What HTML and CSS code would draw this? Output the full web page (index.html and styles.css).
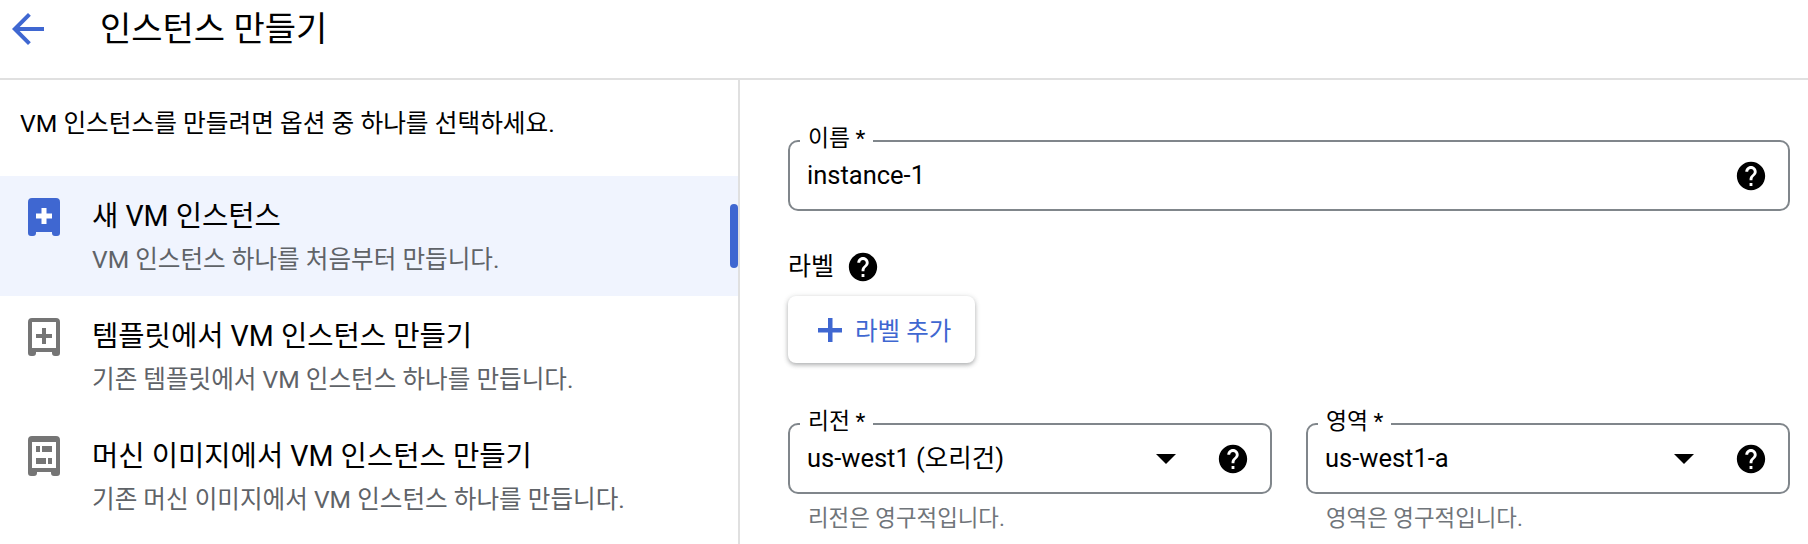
FILE: index.html
```html
<!DOCTYPE html>
<html lang="ko">
<head>
    <meta charset="UTF-8">
    <title>인스턴스 만들기</title>
    <link rel="stylesheet" href="styles.css">
</head>
<body>
    <svg class="defs" width="0" height="0">
        <symbol id="help" viewBox="0 0 24 24">
            <path d="M12 2C6.48 2 2 6.48 2 12s4.48 10 10 10 10-4.48 10-10S17.52 2 12 2zm1 17h-2v-2h2v2zm2.07-7.75l-.9.92C13.45 12.9 13 13.5 13 15h-2v-.5c0-1.1.45-2.1 1.17-2.83l1.24-1.26c.37-.36.59-.86.59-1.41 0-1.1-.9-2-2-2s-2 .9-2 2H8c0-2.21 1.79-4 4-4s4 1.79 4 4c0 .88-.36 1.68-.93 2.25z"/>
        </symbol>
    </svg>

    <header class="header">
        <svg class="back" viewBox="0 0 24 24"><path d="M20 11H7.83l5.59-5.59L12 4l-8 8 8 8 1.41-1.41L7.83 13H20v-2z"/></svg>
        <h1>인스턴스 만들기</h1>
    </header>

    <div class="main">
        <div class="sidebar">
            <p class="intro">VM 인스턴스를 만들려면 옵션 중 하나를 선택하세요.</p>

            <div class="item selected">
                <svg class="item-icon" viewBox="0 0 32 40">
                    <path d="M4 2h24a4 4 0 0 1 4 4v31a3 3 0 0 1-3 3h-2a3 3 0 0 1-3-3v-1H8v1a3 3 0 0 1-3 3H3a3 3 0 0 1-3-3V6a4 4 0 0 1 4-4z"/>
                    <path class="cut" d="M13.500 12h5v5.500H24v5h-5.500V28h-5v-5.500H8v-5h5.500z"/>
                </svg>
                <div>
                    <div class="item-title">새 VM 인스턴스</div>
                    <div class="item-sub">VM 인스턴스 하나를 처음부터 만듭니다.</div>
                </div>
                <span class="indicator"></span>
            </div>

            <div class="item">
                <svg class="item-icon" viewBox="0 0 32 40">
                    <path fill-rule="evenodd" d="M4 2h24a4 4 0 0 1 4 4v31a3 3 0 0 1-3 3h-2a3 3 0 0 1-3-3v-1H8v1a3 3 0 0 1-3 3H3a3 3 0 0 1-3-3V6a4 4 0 0 1 4-4zM4 6v26h24V6z"/>
                    <path d="M14 12h4v6h6v4h-6v6h-4v-6H8v-4h6z"/>
                </svg>
                <div>
                    <div class="item-title">템플릿에서 VM 인스턴스 만들기</div>
                    <div class="item-sub">기존 템플릿에서 VM 인스턴스 하나를 만듭니다.</div>
                </div>
            </div>

            <div class="item">
                <svg class="item-icon" viewBox="0 0 32 40">
                    <path fill-rule="evenodd" d="M4 0h24a4 4 0 0 1 4 4v33a3 3 0 0 1-3 3h-3a3 3 0 0 1-3-3v-1H9v1a3 3 0 0 1-3 3H3a3 3 0 0 1-3-3V4a4 4 0 0 1 4-4zM4 6v26h24V6z"/>
                    <path d="M8 10h4v6H8zM14 10h10v6H14zM8 22h10v6H8zM20 22h4v6h-4z"/>
                </svg>
                <div>
                    <div class="item-title">머신 이미지에서 VM 인스턴스 만들기</div>
                    <div class="item-sub">기존 머신 이미지에서 VM 인스턴스 하나를 만듭니다.</div>
                </div>
            </div>
        </div>

        <div class="content">
            <div class="field">
                <label class="field-label">이름 *</label>
                <span class="field-value">instance-1</span>
                <svg class="help"><use href="#help"/></svg>
            </div>

            <div class="labels-row">
                <span>라벨</span>
                <svg class="help"><use href="#help"/></svg>
            </div>
            <button class="add-btn">
                <svg class="plus" viewBox="0 0 24 24"><path d="M10 0h4.500v10H24v4.500h-9.500V25H10V14.500H0V10h10z"/></svg>
                라벨 추가
            </button>

            <div class="select-row">
                <div class="select-col">
                    <div class="field">
                        <label class="field-label">리전 *</label>
                        <span class="field-value">us-west1 (오리건)</span>
                        <span class="arrow"></span>
                        <svg class="help"><use href="#help"/></svg>
                    </div>
                    <div class="hint">리전은 영구적입니다.</div>
                </div>
                <div class="select-col">
                    <div class="field">
                        <label class="field-label">영역 *</label>
                        <span class="field-value">us-west1-a</span>
                        <span class="arrow"></span>
                        <svg class="help"><use href="#help"/></svg>
                    </div>
                    <div class="hint">영역은 영구적입니다.</div>
                </div>
            </div>
        </div>
    </div>
</body>
</html>
```

FILE: styles.css
```css
body {
    margin: 0;
    height: 544px;
    overflow: hidden;
    background: white;
    color: #000;
    font-family: Roboto, "Noto Sans CJK KR", sans-serif;
}

.defs {
    position: absolute;
}

/* Header */
.header {
    display: flex;
    align-items: center;
    height: 58px;
    padding: 0 0 20px 4px;
    border-bottom: 2px solid #e0e0e0;
}

.back {
    width: 48px;
    height: 48px;
    fill: #3f67d1;
}

.header h1 {
    margin: 0 0 0 48px;
    font-size: 34px;
    font-weight: 400;
    line-height: 40px;
}

.main {
    display: flex;
    height: 464px;
}

/* Left list */
.sidebar {
    width: 738px;
    flex-shrink: 0;
    border-right: 2px solid #e0e0e0;
}

.intro {
    margin: 0;
    padding: 29px 0 37px 20px;
    font-size: 24.7px;
    line-height: 30px;
}

.item {
    position: relative;
    display: flex;
    gap: 32px;
    height: 95px;
    padding: 25px 0 0 28px;
}

.item.selected {
    background: #f0f4fe;
}

.item-icon {
    width: 32px;
    height: 40px;
    margin-top: -5px;
    flex-shrink: 0;
    fill: #757575;
}

.selected .item-icon {
    fill: #3f67d1;
}

.selected .item-icon .cut {
    fill: white;
}

.item-title {
    font-size: 28.6px;
    line-height: 30px;
}

.item-sub {
    margin-top: 14px;
    font-size: 24.6px;
    line-height: 30px;
    color: #5f6368;
}

.indicator {
    position: absolute;
    top: 28px;
    right: 0;
    width: 8px;
    height: 64px;
    border-radius: 4px;
    background: #3f67d1;
}

/* Right form */
.content {
    flex: 1;
    padding: 60px 18px 0 48px;
}

.field {
    position: relative;
    display: flex;
    align-items: center;
    box-sizing: border-box;
    height: 71px;
    padding: 0 20px 0 17px;
    border: 2px solid #80868b;
    border-radius: 10px;
}

.field-label {
    position: absolute;
    top: -18px;
    left: 10px;
    padding: 0 8px;
    background: white;
    font-size: 22.8px;
    line-height: 30px;
}

.field-value {
    flex: 1;
    padding-bottom: 2px;
    font-size: 25.5px;
    line-height: 30px;
}

.help {
    width: 34px;
    height: 34px;
    fill: #000;
}

.arrow {
    width: 0;
    height: 0;
    margin-right: 40px;
    border-left: 10px solid transparent;
    border-right: 10px solid transparent;
    border-top: 10px solid #000;
}

.labels-row {
    display: flex;
    align-items: center;
    gap: 12px;
    margin-top: 39px;
    font-size: 25px;
    line-height: 34px;
}

.add-btn {
    display: flex;
    align-items: center;
    gap: 13px;
    box-sizing: border-box;
    width: 187px;
    height: 67px;
    margin-top: 12px;
    padding: 0 0 0 30px;
    border: none;
    border-radius: 8px;
    background: white;
    color: #3f67d1;
    font-family: inherit;
    font-size: 24.5px;
    box-shadow: 0 2px 4px rgba(60, 64, 67, 0.35), 0 1px 6px rgba(60, 64, 67, 0.12);
}

.plus {
    width: 24px;
    height: 24px;
    fill: #3f67d1;
}

.select-row {
    display: flex;
    gap: 34px;
    margin-top: 60px;
}

.select-col {
    flex: 1;
}

.hint {
    margin-top: 9px;
    padding-left: 20px;
    font-size: 22.4px;
    line-height: 30px;
    color: #70757a;
}
```
